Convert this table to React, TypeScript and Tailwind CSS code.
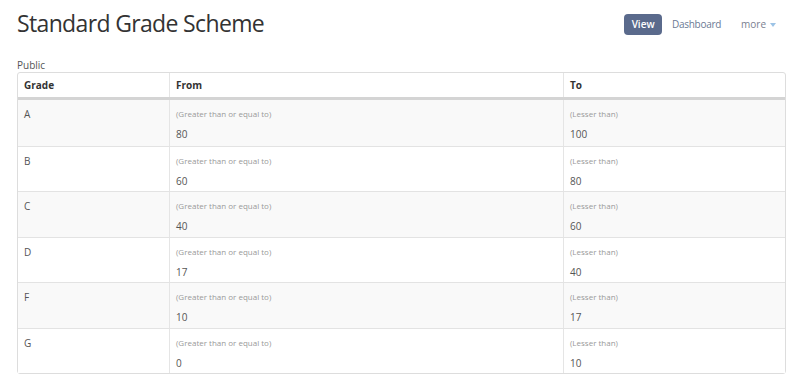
const rows = [
  { grade: 'A', from: '80', to: '100' },
  { grade: 'B', from: '60', to: '80' },
  { grade: 'C', from: '40', to: '60' },
  { grade: 'D', from: '17', to: '40' },
  { grade: 'F', from: '10', to: '17' },
  { grade: 'G', from: '0', to: '10' },
]

export default function App() {
  return (
    <div className="w-[800px] h-[380px] bg-white pl-[17px] pr-[14px] font-['Open_Sans',sans-serif] text-[#555] overflow-hidden">
      {/* title bar */}
      <div className="flex items-start justify-between h-[58px]">
        <h1 className="text-[23px] leading-[32px] pt-[7px] tracking-[-0.65px] text-[#333] font-normal">Standard Grade Scheme</h1>
        <div className="flex items-center pt-[14px] pr-[10px] text-[10px]">
          <span className="bg-[#5a6a8c] text-white font-semibold rounded-[4px] h-[21px] w-[38px] justify-center flex items-center">View</span>
          <span className="ml-[10px] tracking-[-0.3px] text-[#6b7a94]">Dashboard</span>
          <span className="ml-[20px] text-[#7a8090] flex items-center">
            more
            <svg width="6" height="4" viewBox="0 0 6 4" className="ml-[4px]">
              <path d="M0 0 L6 0 L3 4 Z" fill="#9cc3e6" />
            </svg>
          </span>
        </div>
      </div>

      <div className="text-[10px] leading-[14px] text-[#555]">Public</div>

      <div className="border border-[#ddd] rounded-[3px] w-[769px]">
        <div className="grid grid-cols-[152px_394px_1fr] h-[27px] border-b-[3px] border-[#d4d4d4] text-[10px] font-bold text-[#333]">
          <div className="px-[6px] pt-[1px] flex items-center border-r border-[#e5e5e5]">Grade</div>
          <div className="px-[6px] pt-[1px] flex items-center border-r border-[#e5e5e5]">From</div>
          <div className="px-[6px] pt-[1px] flex items-center">To</div>
        </div>
        {rows.map((r, i) => (
          <div
            key={r.grade}
            className={`grid grid-cols-[152px_394px_1fr] h-[45.5px] ${i > 0 ? 'border-t border-[#e3e3e3]' : ''} ${i % 2 === 0 ? 'bg-[#f9f9f9]' : 'bg-white'}`}
          >
            <div className="px-[6px] pt-[7px] text-[10px] border-r border-[#e5e5e5]">{r.grade}</div>
            <div className="px-[6px] pt-[8px] border-r border-[#e5e5e5]">
              <div className="text-[8px] leading-[12px] text-[#999]">(Greater than or equal to)</div>
              <div className="text-[10px] leading-[14px] mt-[7px]">{r.from}</div>
            </div>
            <div className="px-[6px] pt-[8px]">
              <div className="text-[8px] leading-[12px] text-[#999]">(Lesser than)</div>
              <div className="text-[10px] leading-[14px] mt-[7px]">{r.to}</div>
            </div>
          </div>
        ))}
      </div>
    </div>
  )
}
